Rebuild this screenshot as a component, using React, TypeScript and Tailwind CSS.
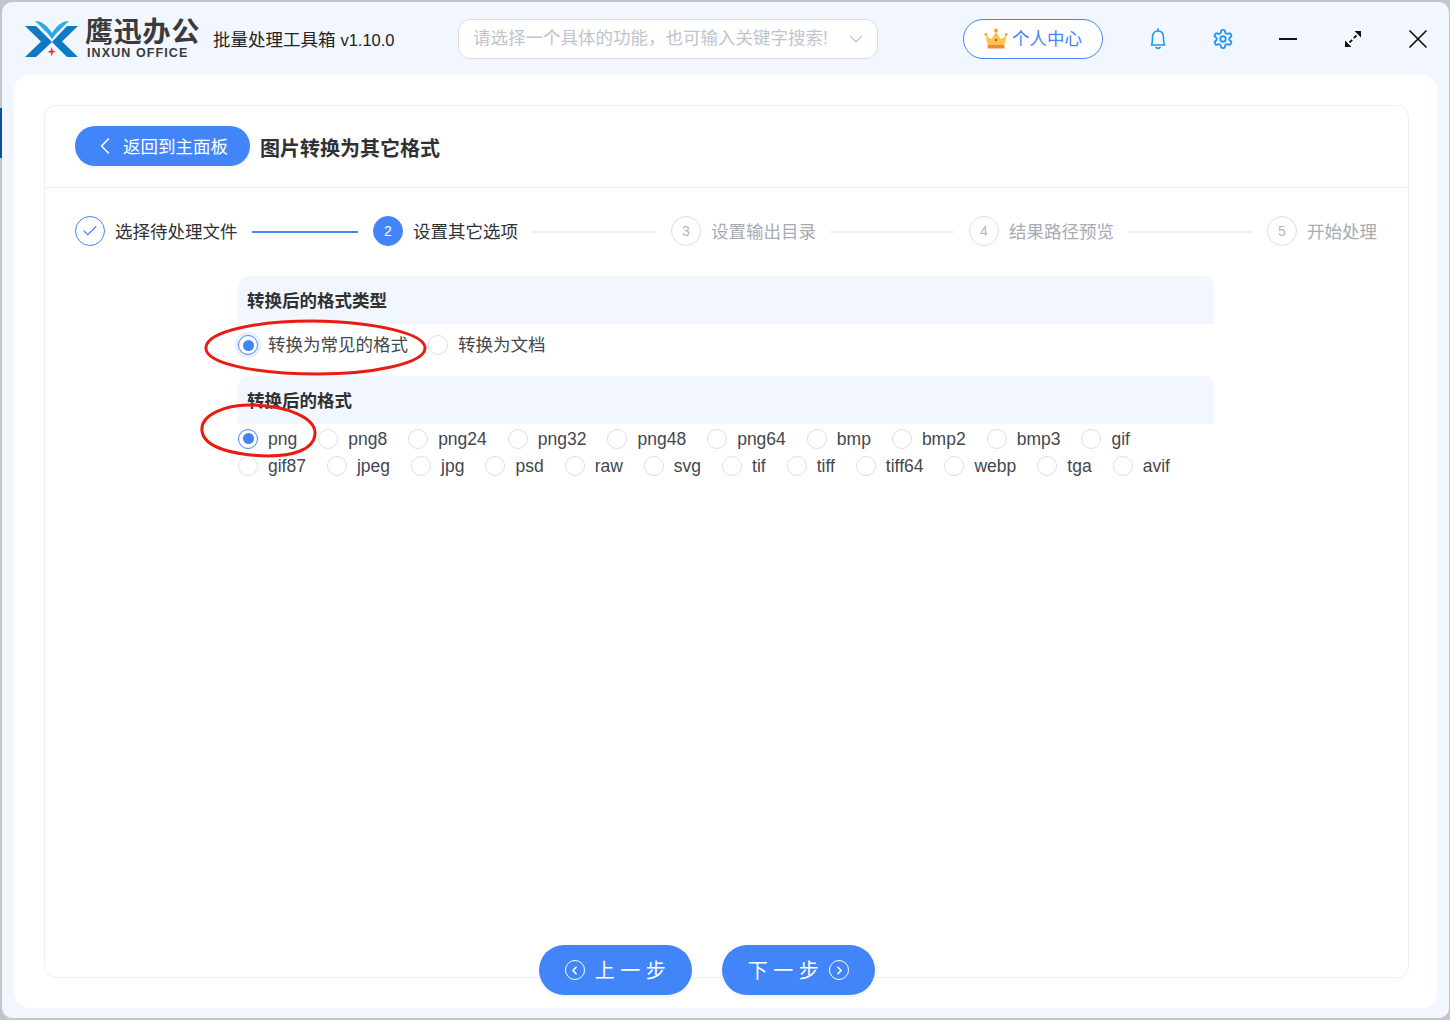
import { Check, ChevronDown, ChevronLeft, ChevronRight, X } from "lucide-react";

const font = "font-['Liberation_Sans','Noto_Sans_CJK_SC',sans-serif]";

const steps = ["选择待处理文件", "设置其它选项", "设置输出目录", "结果路径预览", "开始处理"];
const formats = [
  "png", "png8", "png24", "png32", "png48", "png64", "bmp", "bmp2", "bmp3", "gif",
  "gif87", "jpeg", "jpg", "psd", "raw", "svg", "tif", "tiff", "tiff64", "webp", "tga", "avif",
];

function Logo() {
  return (
    <svg width="54" height="40" viewBox="25 18 54 40" className="shrink-0">
      <path d="M35 20 C41 20 46 23 52 32 C58 23 63 20 69 20 C63 26 57 31 52 38 C47 31 41 26 35 20Z" fill="#2aa9e6" />
      <path d="M25 25 H36 L52 41 L36 56 H25 L41 40.5Z" fill="#0f79c4" />
      <path d="M78 25 H67 L52 41 L67 56 H78 L62 40.5Z" fill="#0f79c4" />
      <path d="M51.7 46 L52.8 49.6 L56 50.7 L52.8 51.8 L51.7 55.5 L50.6 51.8 L47.4 50.7 L50.6 49.6Z" fill="#e8343a" />
    </svg>
  );
}

function Crown() {
  return (
    <svg width="24" height="24" viewBox="0 0 24 24" className="shrink-0">
      <path d="M3.5 18 L1.5 8.5 L7.5 12 L12 4.5 L16.5 12 L22.5 8.5 L20.5 18Z" fill="#fcc54f" />
      <circle cx="12" cy="3.5" r="2" fill="#f5a623" />
      <circle cx="1.8" cy="7.5" r="1.4" fill="#f5a623" />
      <circle cx="22.2" cy="7.5" r="1.4" fill="#f5a623" />
      <rect x="3.5" y="18" width="17" height="3.5" rx="1" fill="#f0883a" />
      <circle cx="12" cy="13" r="1.2" fill="#e8443a" />
    </svg>
  );
}

function Bell() {
  return (
    <svg width="20" height="24" viewBox="0 0 20 24" fill="none" stroke="#2196f3" strokeWidth="1.6" className="shrink-0">
      <path d="M3.5 18 C4.5 16 4.5 14 4.5 10.5 C4.5 6.5 6.5 4 10 4 C13.5 4 15.5 6.5 15.5 10.5 C15.5 14 15.5 16 16.5 18Z" strokeLinejoin="round" />
      <path d="M10 1.8 V4 M8 20.5 C8.8 21.6 11.2 21.6 12 20.5" strokeLinecap="round" />
    </svg>
  );
}

function Gear() {
  return (
    <svg width="22" height="22" viewBox="0 0 24 24" fill="none" stroke="#2196f3" strokeWidth="2" strokeLinecap="round" strokeLinejoin="round" className="shrink-0">
      <path d="M12.22 2h-.44a2 2 0 0 0-2 2v.18a2 2 0 0 1-1 1.73l-.43.25a2 2 0 0 1-2 0l-.15-.08a2 2 0 0 0-2.73.73l-.22.38a2 2 0 0 0 .73 2.73l.15.1a2 2 0 0 1 1 1.72v.51a2 2 0 0 1-1 1.74l-.15.09a2 2 0 0 0-.73 2.73l.22.38a2 2 0 0 0 2.73.73l.15-.08a2 2 0 0 1 2 0l.43.25a2 2 0 0 1 1 1.73V20a2 2 0 0 0 2 2h.44a2 2 0 0 0 2-2v-.18a2 2 0 0 1 1-1.73l.43-.25a2 2 0 0 1 2 0l.15.08a2 2 0 0 0 2.73-.73l.22-.39a2 2 0 0 0-.73-2.73l-.15-.08a2 2 0 0 1-1-1.74v-.5a2 2 0 0 1 1-1.74l.15-.09a2 2 0 0 0 .73-2.73l-.22-.38a2 2 0 0 0-2.73-.73l-.15.08a2 2 0 0 1-2 0l-.43-.25a2 2 0 0 1-1-1.73V4a2 2 0 0 0-2-2z" />
      <circle cx="12" cy="12" r="3" />
    </svg>
  );
}

function Maximize() {
  return (
    <svg width="18" height="18" viewBox="0 0 18 18" className="shrink-0">
      <path d="M12.5 5.5 L9.8 8.2 M8.2 9.8 L5.5 12.5" stroke="#111" strokeWidth="1.8" />
      <path d="M10.5 1 H17 V7.5Z M1 10.5 V17 H7.5Z" fill="#111" />
    </svg>
  );
}

function Radio({ checked, halo }: { checked?: boolean; halo?: boolean }) {
  return (
    <span
      className={`flex h-5 w-5 shrink-0 items-center justify-center rounded-full border bg-white ${
        checked ? "border-[#4285f9]" : "border-[#dcdfe6]"
      } ${halo ? "shadow-[0_0_0_3px_#e6effd]" : ""}`}
    >
      {checked && <span className="h-[11px] w-[11px] rounded-full bg-[#4285f9]" />}
    </span>
  );
}

function Option({ label, checked, halo }: { label: string; checked?: boolean; halo?: boolean }) {
  return (
    <div className="flex h-[27px] items-center gap-[10px]">
      <Radio checked={checked} halo={halo} />
      <span className="mt-[2px] text-[17.5px] leading-none text-[#44474e]">{label}</span>
    </div>
  );
}

function Step({ index, label }: { index: number; label: string }) {
  const done = index === 0;
  const active = index === 1;
  const last = index === steps.length - 1;
  return (
    <div className={`flex h-[30px] items-center ${last ? "shrink-0" : "w-[298px] shrink-0"}`}>
      <span
        className={`flex h-[30px] w-[30px] shrink-0 items-center justify-center rounded-full border text-[14px] ${
          done
            ? "border-[#4285f9] text-[#4285f9]"
            : active
              ? "border-[#4285f9] bg-[#4285f9] text-white"
              : "border-[#dcdfe6] text-[#b4b7bd]"
        }`}
      >
        {done ? <Check size={18} strokeWidth={1.5} /> : index + 1}
      </span>
      <span
        className={`ml-[10px] mt-[3px] shrink-0 text-[17.5px] leading-none ${
          done || active ? "text-[#303133]" : "text-[#a8abb2]"
        }`}
      >
        {label}
      </span>
      {!last && (
        <span className={`ml-[14px] mr-[15px] mt-[1px] h-[2px] flex-1 ${done ? "bg-[#4285f9]" : "bg-[#eeeeee]"}`} />
      )}
    </div>
  );
}

function SectionTitle({ children }: { children: string }) {
  return (
    <div className="flex h-12 items-center rounded-t-[10px] bg-[#f2f6fe] pl-[9px] pt-[3px] text-[17.5px] font-bold text-[#303133]">
      {children}
    </div>
  );
}

export default function App() {
  return (
    <div className={`relative h-[1020px] w-[1450px] overflow-hidden bg-[#c4c5c8] pb-[2px] pl-[2px] pr-[1px] pt-[2px] ${font}`}>
      {/* sliver of the window behind */}
      <div className="absolute left-0 top-[108px] h-[50px] w-[2px] bg-[#0b4fa8]" />

      <div className="flex h-full flex-col rounded-[10px] bg-[#f2f6fe] pb-[10px]">
        <header className="flex h-[73px] shrink-0 items-center">
          <div className="ml-[23px] flex items-center">
            <Logo />
            <div className="ml-[6px] flex w-[118px] flex-col">
              <span className="text-[28px] font-bold leading-[28px] tracking-[0.8px] text-[#3a3a3c]">鹰迅办公</span>
              <span className="ml-[2px] text-[12.5px] font-bold leading-[12px] tracking-[1.1px] text-[#3a3a3c]">INXUN OFFICE</span>
            </div>
          </div>
          <span className="ml-[10px] mt-[4px] w-[245px] shrink-0 text-[17.5px] text-[#222]">
            批量处理工具箱 <span className="text-[16.5px]">v1.10.0</span>
          </span>
          <div className="flex h-10 w-[420px] shrink-0 items-center justify-between rounded-[12px] border border-[#dcdcdc] bg-white pl-[14px] pr-[10px]">
            <span className="whitespace-nowrap pt-[1px] text-[17.5px] leading-none text-[#c0c4cc]">{"请选择一个具体的功能\uFF0C也可输入关键字搜索!"}</span>
            <ChevronDown size={22} strokeWidth={1.1} className="shrink-0 text-[#a8abb2]" />
          </div>
          <button className="ml-[85px] flex h-10 w-[140px] shrink-0 items-center justify-center gap-[4px] rounded-full border border-[#4285f9] bg-white pt-[1px] text-[17.5px] text-[#4285f9]">
            <Crown />
            个人中心
          </button>
          <div className="ml-[45px] flex items-center">
            <Bell />
            <span className="ml-[44px]"><Gear /></span>
            <span className="ml-[45px] h-[2px] w-[18px] bg-[#111]" />
            <span className="ml-[47px]"><Maximize /></span>
            <X size={32} strokeWidth={1.3} className="ml-[40px] text-[#111]" />
          </div>
        </header>

        <main className="ml-[12px] mr-[12px] flex min-h-0 flex-1 flex-col rounded-[16px] bg-white pb-[30px] pl-[30px] pr-[28px] pt-[30px]">
          <section className="flex min-h-0 flex-1 flex-col rounded-[12px] border border-[#eeeeee]">
            <div className="flex h-[82px] shrink-0 items-center border-b border-[#eeeeee] pl-[30px]">
              <button className="mb-[2px] flex h-10 w-[175px] items-center rounded-full bg-[#4285f9] pl-[16px] text-[17.5px] text-white shadow-[0_2px_4px_rgba(0,0,0,0.06)]">
                <ChevronLeft size={28} strokeWidth={1.3} className="mr-[4px]" />
                <span className="pt-[4px] leading-none">返回到主面板</span>
              </button>
              <h1 className="ml-[10px] mt-[5px] text-[20px] font-bold text-[#303133]">图片转换为其它格式</h1>
            </div>

            <div className="ml-[30px] mr-[30px] mt-[28px] flex">
              {steps.map((s, i) => (
                <Step key={s} index={i} label={s} />
              ))}
            </div>

            <div className="ml-[193px] mt-[30px] w-[976px]">
              <SectionTitle>转换后的格式类型</SectionTitle>
              <div className="flex h-[52px] items-center gap-[20px] pb-[10px]">
                <Option label="转换为常见的格式" checked halo />
                <Option label="转换为文档" />
              </div>
              <SectionTitle>转换后的格式</SectionTitle>
              <div className="flex flex-wrap gap-x-[21px] pt-[1px]">
                {formats.map((f, i) => (
                  <Option key={f} label={f} checked={i === 0} />
                ))}
              </div>
            </div>

            <div className="mb-[-18px] mt-auto flex justify-center gap-[30px] pr-[39px]">
              <button className="flex h-[50px] w-[153px] items-center justify-center gap-[10px] rounded-full bg-[#4285f9] text-[20px] text-white shadow-[0_2px_4px_rgba(0,0,0,0.06)]">
                <span className="flex h-[20px] w-[20px] items-center justify-center rounded-full border-[1.5px] border-white">
                  <ChevronLeft size={13} strokeWidth={3} />
                </span>
                <span className="mr-[-5px] pt-[2px] tracking-[5.5px]">上一步</span>
              </button>
              <button className="flex h-[50px] w-[153px] items-center justify-center gap-[10px] rounded-full bg-[#4285f9] text-[20px] text-white shadow-[0_2px_4px_rgba(0,0,0,0.06)]">
                <span className="mr-[-5px] pt-[2px] tracking-[5.5px]">下一步</span>
                <span className="flex h-[20px] w-[20px] items-center justify-center rounded-full border-[1.5px] border-white">
                  <ChevronRight size={13} strokeWidth={3} />
                </span>
              </button>
            </div>
          </section>
        </main>
      </div>

      {/* red hand-drawn annotations */}
      <svg width="1450" height="1020" className="pointer-events-none absolute left-0 top-0" fill="none" stroke="#ea1c12" strokeWidth="3" strokeLinecap="round">
        <path d="M206 347 C208 331 258 321 312 321 C378 322 425 334 425 348 C425 364 370 374 318 374 C258 374 204 364 206 347Z" />
        <path d="M202 431 C200 415 226 404 252 405 C288 406 316 418 315 434 C314 450 292 456 268 456 C234 455 204 448 202 431Z" />
      </svg>
    </div>
  );
}
